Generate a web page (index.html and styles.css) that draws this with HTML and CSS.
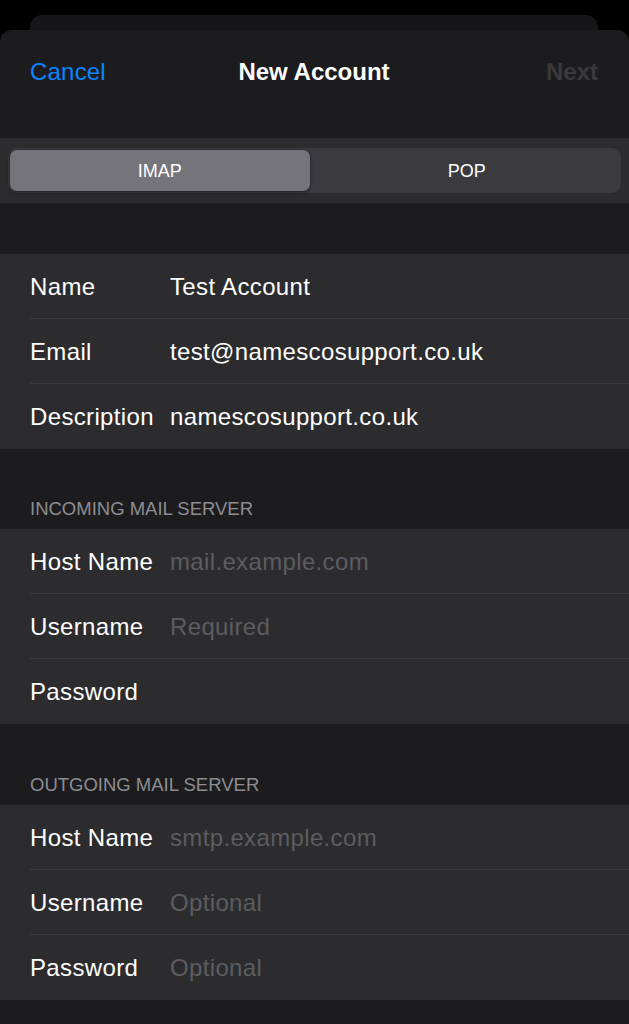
FILE: index.html
```html
<!DOCTYPE html>
<html>
<head>
  <meta charset="utf-8">
  <title>New Account</title>
  <link rel="stylesheet" href="styles.css">
</head>
<body>
  <div class="card-behind"></div>
  <div class="sheet">
    <div class="navbar">
      <span class="nav-cancel">Cancel</span>
      <span class="nav-title">New Account</span>
      <span class="nav-next">Next</span>
    </div>

    <div class="segment-row">
      <div class="segmented">
        <div class="seg seg-active">IMAP</div>
        <div class="seg">POP</div>
      </div>
    </div>

    <div class="spacer"></div>

    <div class="group">
      <div class="row"><span class="label">Name</span><span class="value">Test Account</span></div>
      <div class="row"><span class="label">Email</span><span class="value">test@namescosupport.co.uk</span></div>
      <div class="row"><span class="label">Description</span><span class="value">namescosupport.co.uk</span></div>
    </div>

    <div class="section-header">INCOMING MAIL SERVER</div>
    <div class="group">
      <div class="row"><span class="label">Host Name</span><span class="value placeholder">mail.example.com</span></div>
      <div class="row"><span class="label">Username</span><span class="value placeholder">Required</span></div>
      <div class="row"><span class="label">Password</span><span class="value"></span></div>
    </div>

    <div class="section-header second">OUTGOING MAIL SERVER</div>
    <div class="group">
      <div class="row"><span class="label">Host Name</span><span class="value placeholder">smtp.example.com</span></div>
      <div class="row"><span class="label">Username</span><span class="value placeholder">Optional</span></div>
      <div class="row"><span class="label">Password</span><span class="value placeholder">Optional</span></div>
    </div>
  </div>
</body>
</html>
```

FILE: styles.css
```css
html, body { margin:0; padding:0; background:#000; }
body { font-family:"Liberation Sans", Arial, sans-serif; color:#fff; padding-top:15px; }

.card-behind { height:15px; margin:0 31px 0 30px; background:#161618; border-radius:12px 12px 0 0; }

.sheet { background:#1c1c1e; border-radius:12px 12px 0 0; min-height:calc(100vh - 30px); }

.navbar { height:82px; display:grid; grid-template-columns:1fr auto 1fr; align-items:center; padding:1px 31px 0 30px; box-sizing:border-box; font-size:24px; line-height:28px; }
.nav-cancel { color:#0a84ff; letter-spacing:0.2px; }
.nav-title { font-weight:bold; }
.nav-next { font-weight:bold; color:#3a3a3c; text-align:right; }

.segment-row { margin-top:26px; background:#2c2c2e; padding:10px 8px; }
.segmented { height:41px; padding:2px; background:#3a3a3f; border-radius:9px; display:grid; grid-template-columns:1fr 1fr; }
.seg { display:flex; align-items:center; justify-content:center; font-size:18px; color:#fff; border-radius:7px; padding-top:1px; }
.seg-active { background:#75747b; box-shadow:0 0 0 1px rgba(0,0,0,0.18), 0 2px 4px rgba(0,0,0,0.2); margin-right:5px; }

.spacer { height:51px; }

.group { background:#2c2c2e; padding-left:30px; }
.row { height:65px; display:flex; align-items:center; padding-top:1px; box-sizing:border-box; font-size:24px; letter-spacing:0.35px; border-bottom:1px solid #3a3a3d; }
.row:last-child { border-bottom:none; }
.label { width:140px; flex:none; color:#fff; }
.value { color:#fff; }
.placeholder { color:#5c5c61; }

.section-header { height:80px; box-sizing:border-box; display:flex; align-items:flex-end; padding:0 0 9px 30px; font-size:18.5px; line-height:22px; color:#8d8d93; }
.section-header.second { height:81px; }
```
